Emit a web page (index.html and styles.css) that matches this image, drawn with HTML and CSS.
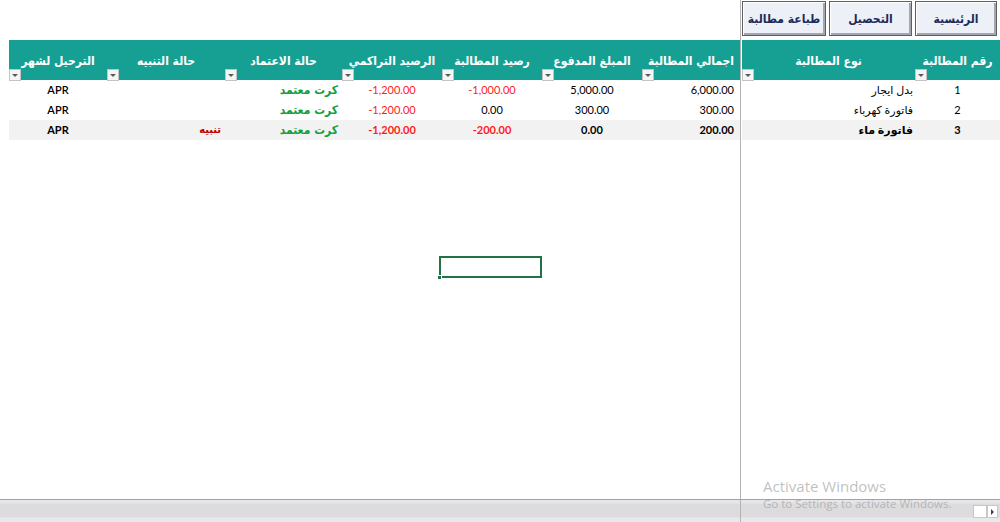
FILE: index.html
```html
<!DOCTYPE html>
<html lang="ar" dir="rtl">
<head>
  <meta charset="UTF-8" />
  <title>المطالبات</title>
  <meta name="viewport" content="width=device-width, initial-scale=1.0" />
  <link rel="stylesheet" href="styles.css">
</head>
<body>

  <div class="window">
    <!-- SHEET AREA -->
    <div class="sheet">

      <!-- RIGHT PANE (frozen) -->
      <section class="pane pane-right">
        <div class="toolbar">
          <button class="macro-btn btn-home">الرئيسية</button>
          <button class="macro-btn btn-collect">التحصيل</button>
          <button class="macro-btn btn-print">طباعة مطالبة</button>
        </div>

        <div class="row head">
          <div class="th"><span>رقم المطالبة</span><i class="filter"></i></div>
          <div class="th"><span>نوع المطالبة</span><i class="filter"></i></div>
        </div>
        <div class="row">
          <div class="td center">1</div>
          <div class="td right">بدل ايجار</div>
        </div>
        <div class="row">
          <div class="td center">2</div>
          <div class="td right">فاتورة كهرباء</div>
        </div>
        <div class="row total">
          <div class="td center">3</div>
          <div class="td right">فاتورة ماء</div>
        </div>
      </section>

      <!-- LEFT PANE -->
      <section class="pane pane-left">
        <div class="toolbar"></div>

        <div class="row head">
          <div class="th"><span>اجمالي المطالبة</span><i class="filter"></i></div>
          <div class="th"><span>المبلغ المدفوع</span><i class="filter"></i></div>
          <div class="th"><span>رصيد المطالبة</span><i class="filter"></i></div>
          <div class="th"><span>الرصيد التراكمي</span><i class="filter"></i></div>
          <div class="th"><span>حالة الاعتماد</span><i class="filter"></i></div>
          <div class="th"><span>حالة التنبيه</span><i class="filter"></i></div>
          <div class="th"><span>الترحيل لشهر</span><i class="filter"></i></div>
        </div>

        <div class="row">
          <div class="td num right">6,000.00</div>
          <div class="td num center">5,000.00</div>
          <div class="td num center neg">-1,000.00</div>
          <div class="td num center neg">-1,200.00</div>
          <div class="td right ok">كرت معتمد</div>
          <div class="td right"></div>
          <div class="td center month">APR</div>
        </div>
        <div class="row">
          <div class="td num right">300.00</div>
          <div class="td num center">300.00</div>
          <div class="td num center">0.00</div>
          <div class="td num center neg">-1,200.00</div>
          <div class="td right ok">كرت معتمد</div>
          <div class="td right"></div>
          <div class="td center month">APR</div>
        </div>
        <div class="row total">
          <div class="td num right">200.00</div>
          <div class="td num center">0.00</div>
          <div class="td num center neg">-200.00</div>
          <div class="td num center neg">-1,200.00</div>
          <div class="td right ok">كرت معتمد</div>
          <div class="td right alert">تنبيه</div>
          <div class="td center month">APR</div>
        </div>
      </section>

      <!-- active cell -->
      <div class="selection"><span class="handle"></span></div>
    </div>

    <!-- HORIZONTAL SCROLL BAR -->
    <div class="hscroll">
      <div class="hscroll-left"></div>
      <div class="hscroll-right">
        <span class="thumb"></span>
        <span class="arrow"></span>
      </div>
    </div>

    <!-- windows watermark -->
    <div class="watermark">
      <p class="wm-title">Activate Windows</p>
      <p class="wm-sub">Go to Settings to activate Windows.</p>
    </div>
  </div>

</body>
</html>
```

FILE: styles.css
```css
/* ---------------------------------------------
   GENERAL / RESET
--------------------------------------------- */
* {
  margin: 0;
  padding: 0;
  box-sizing: border-box;
}

body {
  font-family: Lato, "DejaVu Sans", sans-serif;
  background: #ffffff;
  color: #000;
  overflow: hidden;
}

.window {
  position: relative;
  width: 1000px;
  height: 522px;
  display: flex;
  flex-direction: column;
}

/* ---------------------------------------------
   SHEET + PANES
--------------------------------------------- */
.sheet {
  position: relative;
  flex: 1;
  display: flex;
}

.pane-left {
  width: 741px;
  padding-left: 9px;
  border-right: 1px solid #b4b4b4;
}
.pane-right {
  width: 259px;
  padding-left: 1px;
}

.toolbar {
  height: 40px;
  display: flex;
  gap: 3px;
  padding: 1px 3px 0 0;
}

/* Macro buttons */
.macro-btn {
  height: 35px;
  background: #edf1f7;
  border: 1px solid #5f5f5f;
  box-shadow: inset 1px 1px 0 #ffffff, inset -2px -2px 0 #a2a6ad;
  color: #1c2b5a;
  font-family: "DejaVu Sans Condensed", "DejaVu Sans", sans-serif;
  font-weight: bold;
  font-size: 12px;
}
.btn-home { width: 82px; }
.btn-collect { width: 83px; }
.btn-print { width: 84px; }

/* ---------------------------------------------
   TABLE ROWS
--------------------------------------------- */
.row {
  display: grid;
  height: 20px;
}
.pane-left .row {
  grid-template-columns: 98px 100px 100px 100px 117px 118px 98px;
}
.pane-right .row {
  grid-template-columns: 85px 173px;
}

.row.head {
  height: 40px;
  background: #16a094;
}
.th {
  display: flex;
  flex-direction: column;
  align-items: center;
  padding-top: 13px;
  color: #ffffff;
  font-family: "DejaVu Sans Condensed", "DejaVu Sans", sans-serif;
  font-weight: bold;
  font-size: 12px;
  white-space: nowrap;
}
.th span {
  line-height: 16px;
}

/* filter dropdown */
.filter {
  align-self: flex-end;
  margin-top: auto;
  margin-bottom: 1px;
  width: 12px;
  height: 12px;
  background: #f5f5f5;
  border: 1px solid #c3c3c3;
  display: flex;
  align-items: center;
  justify-content: center;
}
.filter::after {
  content: "";
  border-left: 3px solid transparent;
  border-right: 3px solid transparent;
  border-top: 3px solid #5a5a5a;
  margin-top: 1px;
}

.td {
  font-size: 11px;
  line-height: 20px;
  white-space: nowrap;
  overflow: hidden;
}
.td.right { text-align: right; padding-right: 4px; }
.td.center { text-align: center; }
.td.num { direction: ltr; }
.td.num.right { padding-right: 6px; }
.pane-right .td.right { padding-right: 2px; }

.td.neg { color: #ff1a1a; }
.td.ok {
  color: #12a043;
  font-weight: bold;
  font-size: 12px;
  font-family: "DejaVu Sans Condensed", "DejaVu Sans", sans-serif;
}
.td.alert {
  color: #c00000;
  font-weight: bold;
  font-family: "DejaVu Sans Condensed", "DejaVu Sans", sans-serif;
}
.td.month { font-weight: 600; }

.row.total {
  background: #f2f2f2;
  font-weight: bold;
}
.row.total .td { font-weight: bold; }

/* active cell */
.selection {
  position: absolute;
  left: 439px;
  top: 256px;
  width: 103px;
  height: 22px;
  border: 2px solid #217346;
}
.handle {
  position: absolute;
  left: -4px;
  bottom: -4px;
  width: 5px;
  height: 5px;
  background: #217346;
  border: 1px solid #ffffff;
}

/* ---------------------------------------------
   HORIZONTAL SCROLL BAR
--------------------------------------------- */
.hscroll {
  direction: ltr;
  height: 23px;
  display: flex;
  border-top: 1px solid #a3a3a3;
  background: linear-gradient(#e6e5e8 0, #e6e5e8 3px, #dcdbdd 4px, #dcdbdd 17px, #e9e8eb 18px);
}
.hscroll-left {
  width: 741px;
  border-right: 1px solid #b4b4b4;
}
.hscroll-right {
  flex: 1;
  display: flex;
  justify-content: flex-end;
  align-items: flex-start;
  padding: 5px 2px 0 0;
}
.thumb {
  width: 14px;
  height: 13px;
  background: #ffffff;
  border: 1px solid #c8c8c8;
}
.arrow {
  width: 11px;
  height: 13px;
  background: #ffffff;
  border: 1px solid #c8c8c8;
  display: flex;
  align-items: center;
  justify-content: center;
}
.arrow::after {
  content: "";
  border-top: 3px solid transparent;
  border-bottom: 3px solid transparent;
  border-left: 3px solid #444;
}

/* ---------------------------------------------
   WATERMARK
--------------------------------------------- */
.watermark {
  position: absolute;
  left: 763px;
  top: 476px;
  direction: ltr;
  font-family: "Open Sans", sans-serif;
  color: rgba(150, 150, 150, 0.6);
  pointer-events: none;
}
.wm-title {
  font-size: 15px;
  line-height: 20px;
}
.wm-sub {
  font-size: 11.5px;
  line-height: 16px;
}
```
